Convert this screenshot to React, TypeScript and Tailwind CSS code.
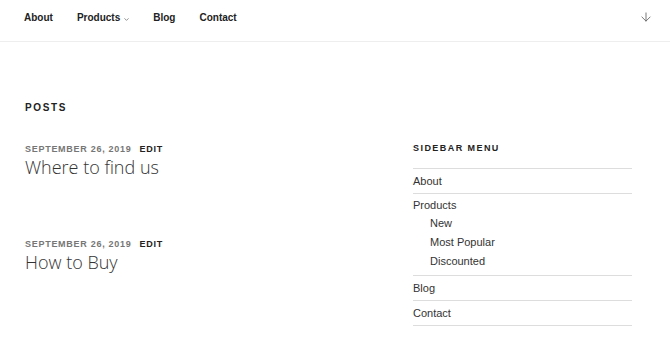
import React from 'react';
import { ArrowDown, ChevronDown } from 'lucide-react';

interface Post {
  date: string;
  title: string;
}

const posts: Post[] = [
  { date: 'September 26, 2019', title: 'Where to find us' },
  { date: 'September 26, 2019', title: 'How to Buy' },
];

const navItems = ['About', 'Products', 'Blog', 'Contact'];

const App: React.FC = () => {
  return (
    <div className="min-h-[350px] bg-white text-[#222] font-['Liberation_Sans',Arial,sans-serif]">
      {/* top navigation */}
      <header className="flex h-[42px] items-start justify-between border-b border-[#eeeeee] pl-[24px] pr-[17px]">
        <nav className="flex gap-[24px] pt-[11px] text-[10px] font-bold leading-[14px] text-[#222]">
          {navItems.map((item) => (
            <a key={item} className="flex items-center">
              {item}
              {item === 'Products' && (
                <ChevronDown className="ml-[3px] mr-[-1px] mt-[2px] h-[7px] w-[7px] text-[#444]" strokeWidth={2} />
              )}
            </a>
          ))}
        </nav>
        <ArrowDown className="mt-[10px] h-[14px] w-[14px] text-[#666]" strokeWidth={1.5} />
      </header>

      <main className="flex pl-[25px] pr-[38px] pt-[59px]">
        <div className="flex-1">
          <h2 className="text-[10px] font-extrabold uppercase leading-[14px] tracking-[0.16em] text-[#222]">
            Posts
          </h2>
          <div className="mt-[27px] flex flex-col gap-[58px]">
            {posts.map((post, i) => (
              <article key={i}>
                <div className="flex gap-[8px] text-[9px] font-bold uppercase leading-[14px] tracking-[0.08em]">
                  <span className="text-[#767676]">{post.date}</span>
                  <span className="text-[#222]">Edit</span>
                </div>
                <h3 className="-mt-px font-['Open_Sans',sans-serif] text-[18px] font-light leading-[24px] text-[#333]">
                  {post.title}
                </h3>
              </article>
            ))}
          </div>
        </div>

        <aside className="mt-[40px] w-[219px]">
          <h2 className="text-[9px] font-extrabold uppercase leading-[14px] tracking-[0.16em] text-[#222]">
            Sidebar Menu
          </h2>
          <ul className="mt-[13px] border-b border-[#dddddd] text-[11px] leading-[12px] text-[#333]">
            <li className="border-t border-[#dddddd] py-[6px]">About</li>
            <li className="border-t border-[#dddddd] pt-[5px] pb-[4px]">
              Products
              <ul className="mt-[3px] pl-[17px] leading-[19px]">
                <li>New</li>
                <li>Most Popular</li>
                <li>Discounted</li>
              </ul>
            </li>
            <li className="border-t border-[#dddddd] py-[6px]">Blog</li>
            <li className="border-t border-[#dddddd] py-[6px]">Contact</li>
          </ul>
        </aside>
      </main>
    </div>
  );
};

export default App;
